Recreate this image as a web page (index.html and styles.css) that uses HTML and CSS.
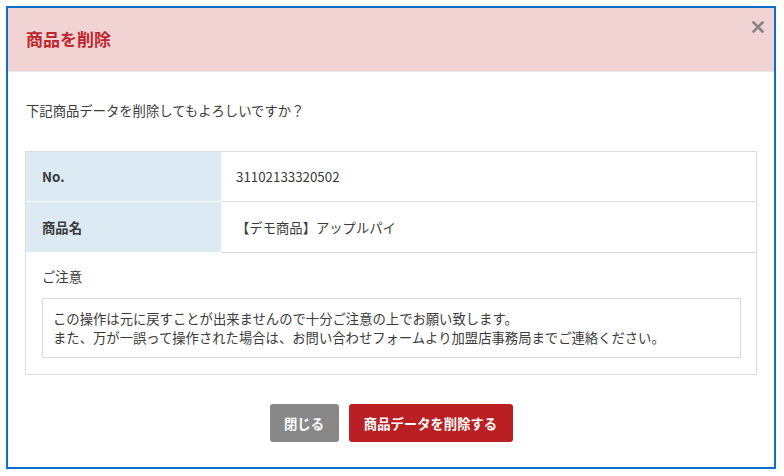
FILE: index.html
```html
<!DOCTYPE html>
<html lang="ja">
<head>
<meta charset="utf-8">
<title>商品を削除</title>
<link rel="stylesheet" href="styles.css">
</head>
<body>
<div class="modal">
  <div class="modal-header">
    <h1 class="modal-title">商品を削除</h1>
    <button class="close" aria-label="閉じる">
      <svg width="12" height="12" viewBox="0 0 12 12"><path d="M1.5 1.5 L10.5 10.5 M10.5 1.5 L1.5 10.5" stroke="#858585" stroke-width="2.6" stroke-linecap="square" fill="none"/></svg>
    </button>
  </div>
  <div class="modal-body">
    <p class="message">下記商品データを削除してもよろしいですか？</p>
    <div class="detail">
      <div class="row">
        <div class="label">No.</div>
        <div class="value">31102133320502</div>
      </div>
      <div class="row">
        <div class="label">商品名</div>
        <div class="value">【デモ商品】アップルパイ</div>
      </div>
      <div class="notice">
        <div class="notice-title">ご注意</div>
        <div class="notice-box">
          この操作は元に戻すことが出来ませんので十分ご注意の上でお願い致します。<br>
          また、万が一誤って操作された場合は、お問い合わせフォームより加盟店事務局までご連絡ください。
        </div>
      </div>
    </div>
    <div class="actions">
      <button class="btn btn-gray">閉じる</button>
      <button class="btn btn-red">商品データを削除する</button>
    </div>
  </div>
</div>
</body>
</html>
```
FILE: styles.css
```css
* { box-sizing: border-box; }
html, body { margin: 0; padding: 0; background: #fff; }
body {
  font-family: "Noto Sans CJK JP", "Noto Sans", sans-serif;
  font-size: 13.33px;
  color: #3a3a3a;
  padding: 6px 0 0 6px;
}
.modal {
  width: 770px;
  height: 463px;
  border: 2px solid #0b6fc9;
  background: #fff;
  display: flex;
  flex-direction: column;
}
.modal-header {
  height: 64px;
  background: #f2d3d4;
  border-bottom: 1px solid #e6e6ee;
  display: flex;
  align-items: center;
  padding: 0 18px 3px;
  position: relative;
}
.modal-title {
  margin: 0;
  font-size: 17px;
  font-weight: bold;
  color: #c0272d;
  line-height: 1;
}
.close {
  position: absolute;
  right: 6px;
  top: 9px;
  width: 20px;
  height: 20px;
  padding: 0;
  border: 0;
  background: transparent;
  display: flex;
  align-items: center;
  justify-content: center;
}
.modal-body {
  padding: 0 17px;
}
.message {
  margin: 0;
  padding: 29px 0 0 1px;
  line-height: 20px;
  height: 79px;
}
.detail {
  border: 1px solid #dcdcdc;
}
.row {
  display: flex;
  height: 50px;
  border-bottom: 1px solid #dcdcdc;
}
.row + .row { height: 51px; }
.label {
  width: 195px;
  background: #dbeaf3;
  font-weight: bold;
  padding-left: 16px;
  display: flex;
  align-items: center;
  border-bottom: 1px solid #fff;
  margin-bottom: -1px;
}
.value {
  flex: 1;
  padding-left: 15px;
  display: flex;
  align-items: center;
}
.notice {
  padding: 14px 15px 16px 16px;
}
.notice-title {
  line-height: 20px;
  margin-bottom: 11px;
}
.notice-box {
  border: 1px solid #dcdcdc;
  padding: 10px 9px 10px 10px;
  line-height: 19px;
}
.actions {
  display: flex;
  justify-content: center;
  gap: 10px;
  margin-top: 29px;
}
.btn {
  height: 38px;
  border: 0;
  border-radius: 3px;
  color: #fff;
  font-family: inherit;
  font-size: 13.33px;
  font-weight: bold;
  padding: 0;
}
.btn-gray { background: #888888; width: 69px; }
.btn-red { background: #b91f23; width: 164px; }
```
